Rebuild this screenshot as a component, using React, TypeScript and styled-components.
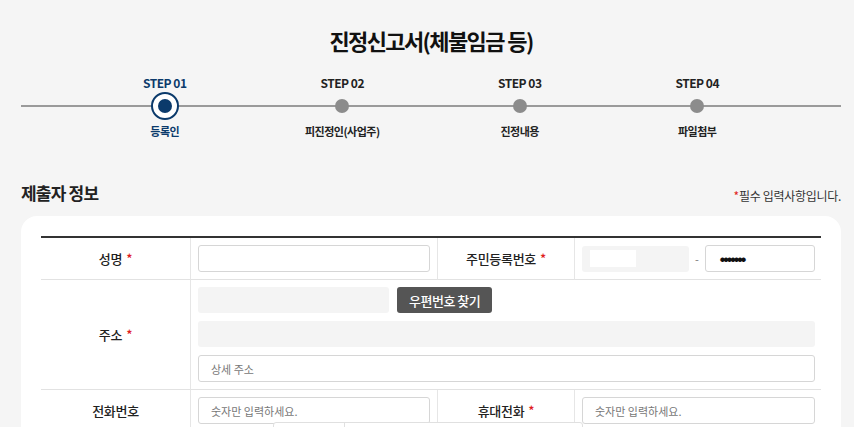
import React from "react";
import styled, { createGlobalStyle } from "styled-components";

const GlobalStyle = createGlobalStyle`
  html, body {
    margin: 0;
    padding: 0;
    background: #f5f5f5;
  }
  body {
    font-family: "Noto Sans CJK KR", "Noto Sans", sans-serif;
    color: #222;
  }
  * { box-sizing: border-box; }
`;

const Page = styled.div`
  padding: 0 13px 40px 21px;
`;

const Title = styled.h1`
  margin: 0;
  padding-top: 24px;
  font-size: 22px;
  line-height: 32px;
  font-weight: 700;
  text-align: center;
  color: #111;
  letter-spacing: -1.6px;
`;

const Steps = styled.ol`
  position: relative;
  list-style: none;
  margin: 19px 0 0;
  padding: 0 55px;
  display: grid;
  grid-template-columns: repeat(4, 1fr);
  &::before {
    content: "";
    position: absolute;
    left: 0;
    right: 0;
    top: 30px;
    height: 2px;
    background: #9a9a9a;
  }
`;

const Step = styled.li<{ active?: boolean }>`
  position: relative;
  display: flex;
  flex-direction: column;
  align-items: center;
  color: ${(p) => (p.active ? "#0b3a6b" : "#222")};
`;

const StepNo = styled.span`
  font-size: 12px;
  line-height: 16px;
  font-weight: 700;
  letter-spacing: -0.5px;
`;

const Dot = styled.span<{ active?: boolean }>`
  margin: ${(p) => (p.active ? "1px 0 3px" : "8px 0 10px")};
  width: ${(p) => (p.active ? "28px" : "14px")};
  height: ${(p) => (p.active ? "28px" : "14px")};
  border-radius: 50%;
  background: ${(p) => (p.active ? "#fff" : "#8c8c8c")};
  border: ${(p) => (p.active ? "2px solid #0b3a6b" : "none")};
  display: flex;
  align-items: center;
  justify-content: center;
  &::after {
    content: "";
    display: ${(p) => (p.active ? "block" : "none")};
    width: 14px;
    height: 14px;
    border-radius: 50%;
    background: #0b3a6b;
  }
`;

const StepName = styled.span`
  font-size: 11px;
  line-height: 16px;
  font-weight: 700;
  letter-spacing: -0.5px;
`;

const SectionHead = styled.div`
  margin-top: 43px;
  display: flex;
  justify-content: space-between;
  align-items: flex-end;
`;

const SectionTitle = styled.h2`
  margin: 0;
  font-size: 17px;
  line-height: 22px;
  font-weight: 700;
  color: #222;
  letter-spacing: -0.8px;
`;

const Note = styled.p`
  margin: 0;
  font-size: 12px;
  line-height: 16px;
  color: #333;
  letter-spacing: -0.3px;
`;

const Req = styled.span<{ lead?: boolean }>`
  color: #e0201b;
  margin-left: ${(p) => (p.lead ? "0" : "4px")};
`;

const Card = styled.section`
  margin-top: 12px;
  background: #fff;
  border-radius: 16px;
  padding: 20px 20px 30px;
`;

const Table = styled.div`
  border-top: 2px solid #333;
  display: grid;
  grid-template-columns: 150px 247px 137px 1fr;
`;

const Label = styled.div`
  border-bottom: 1px solid #e2e2e2;
  border-right: 1px solid #e6e6e6;
  display: flex;
  align-items: center;
  justify-content: center;
  font-size: 13px;
  font-weight: 500;
  color: #222;
  letter-spacing: -0.3px;
`;

const Cell = styled.div<{ span?: number; last?: boolean }>`
  position: relative;
  grid-column: ${(p) => (p.span ? `span ${p.span}` : "auto")};
  border-bottom: 1px solid #e2e2e2;
  border-right: ${(p) => (p.last ? "none" : "1px solid #e6e6e6")};
  padding: 7px 6px 7px 7px;
  display: flex;
  flex-direction: column;
  gap: 8px;
`;

const Line = styled.div`
  display: flex;
  align-items: center;
  gap: 8px;
`;

const Input = styled.input<{ w?: number }>`
  width: ${(p) => (p.w ? `${p.w}px` : "100%")};
  height: 27px;
  border: 1px solid #d6d6d6;
  border-radius: 3px;
  background: #fff;
  padding: 0 12px;
  font-family: inherit;
  font-size: 11px;
  color: #111;
  outline: none;
  &::placeholder { color: #777; }
`;

const Grey = styled.div<{ w?: number }>`
  width: ${(p) => (p.w ? `${p.w}px` : "100%")};
  height: 26px;
  border-radius: 3px;
  background: #f4f4f4;
  flex-shrink: 0;
  display: flex;
  align-items: center;
  padding: 0 8px;
`;

const Mask = styled.span`
  width: 46px;
  height: 17px;
  background: #fff;
`;

const Dash = styled.span`
  font-size: 11px;
  color: #777;
  width: 0;
  flex: 1;
  text-align: center;
  margin: 0 -8px;
`;

const Secret = styled.div`
  width: 110px;
  height: 27px;
  border: 1px solid #d6d6d6;
  border-radius: 3px;
  padding: 0 14px;
  display: flex;
  align-items: center;
  font-size: 5px;
  letter-spacing: -1.5px;
  color: #111;
`;

const Button = styled.button`
  height: 26px;
  padding: 0 12px;
  border: none;
  border-radius: 3px;
  background: #555;
  color: #fff;
  font-family: inherit;
  font-size: 13px;
  font-weight: 500;
  letter-spacing: -0.5px;
`;

const Popup = styled.div`
  position: absolute;
  left: 82px;
  top: 32px;
  width: 310px;
  height: 40px;
  background: #fff;
  border: 1px solid #e0e0e0;
  border-radius: 3px;
  display: grid;
  grid-template-columns: 71px 1fr;
  z-index: 2;
  & > span { border-right: 1px solid #e0e0e0; }
`;

const steps = [
  { no: "STEP 01", name: "등록인", active: true },
  { no: "STEP 02", name: "피진정인(사업주)" },
  { no: "STEP 03", name: "진정내용" },
  { no: "STEP 04", name: "파일첨부" },
];

export default function App() {
  return (
    <>
      <GlobalStyle />
      <Page>
        <Title>진정신고서(체불임금 등)</Title>
        <Steps>
          {steps.map((s) => (
            <Step key={s.no} active={s.active}>
              <StepNo>{s.no}</StepNo>
              <Dot active={s.active} />
              <StepName>{s.name}</StepName>
            </Step>
          ))}
        </Steps>

        <SectionHead>
          <SectionTitle>제출자 정보</SectionTitle>
          <Note>
            <Req lead>*</Req>필수 입력사항입니다.
          </Note>
        </SectionHead>

        <Card>
          <Table>
            <Label>
              성명<Req>*</Req>
            </Label>
            <Cell>
              <Input w={232} />
            </Cell>
            <Label>
              주민등록번호<Req>*</Req>
            </Label>
            <Cell last>
              <Line>
                <Grey w={107}>
                  <Mask />
                </Grey>
                <Dash>-</Dash>
                <Secret>●●●●●●●</Secret>
              </Line>
            </Cell>

            <Label>
              주소<Req>*</Req>
            </Label>
            <Cell span={3} last>
              <Line>
                <Grey w={191} />
                <Button>우편번호 찾기</Button>
              </Line>
              <Grey />
              <Input placeholder="상세 주소" />
            </Cell>

            <Label>전화번호</Label>
            <Cell>
              <Input w={232} placeholder="숫자만 입력하세요." />
              <Popup>
                <span />
                <div />
              </Popup>
            </Cell>
            <Label>
              휴대전화<Req>*</Req>
            </Label>
            <Cell last>
              <Input placeholder="숫자만 입력하세요." />
            </Cell>
          </Table>
        </Card>
      </Page>
    </>
  );
}
